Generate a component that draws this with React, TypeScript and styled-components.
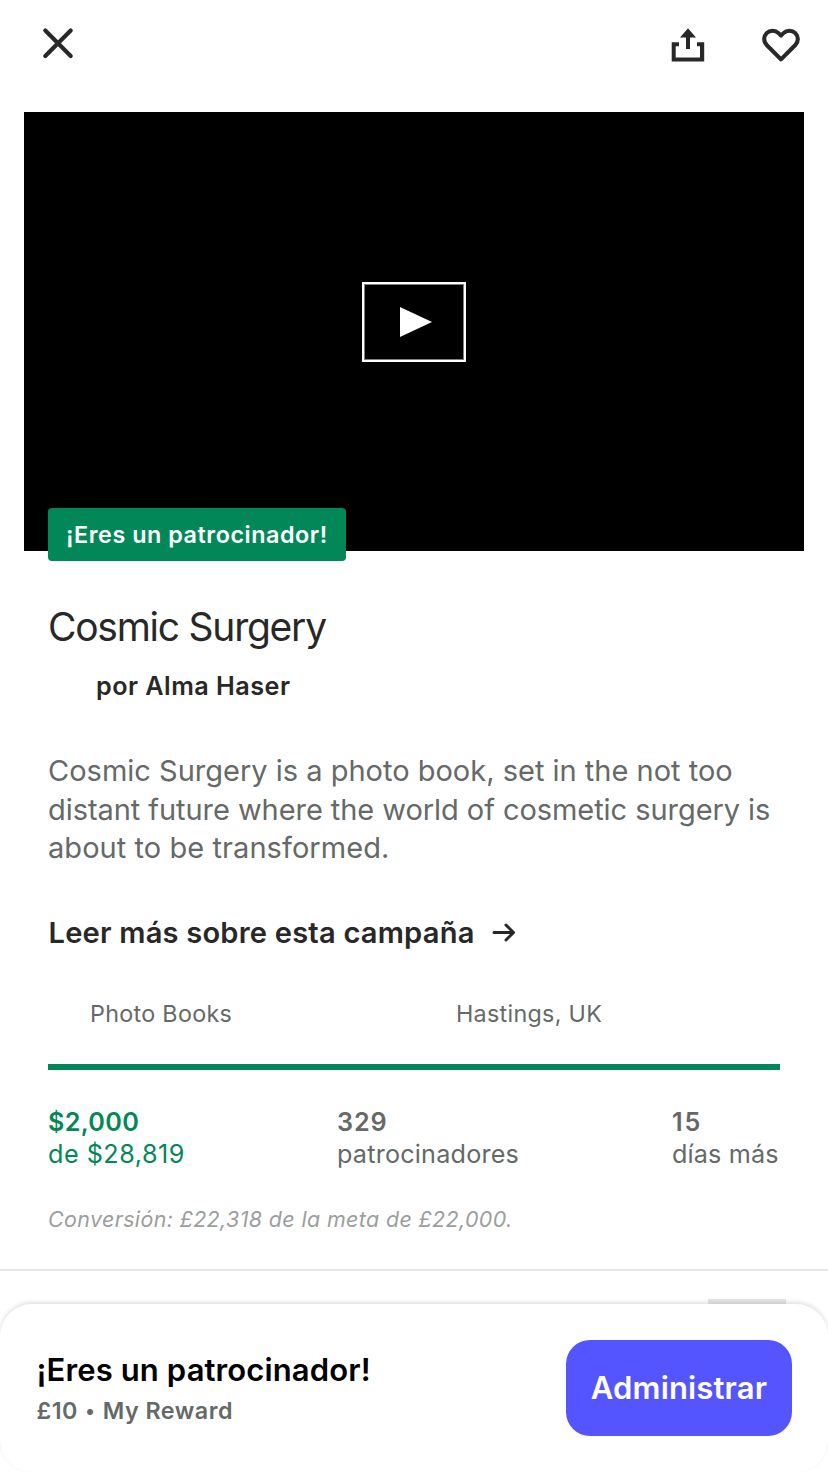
import React from 'react';
import styled, { createGlobalStyle } from 'styled-components';

const Global = createGlobalStyle`
  * { box-sizing: border-box; }
  body { margin: 0; background: #fff; font-family: Inter, "Liberation Sans", sans-serif; }
`;

const Screen = styled.div`
  position: relative;
  width: 828px;
  height: 1472px;
  overflow: hidden;
  background: #fff;
  color: #282828;
`;
const TopBar = styled.header`
  display: flex;
  align-items: center;
  justify-content: space-between;
  height: 88px;
  padding: 0 25px 0 40px;
`;
const Actions = styled.div`
  display: flex;
  gap: 52px;
`;
const IconButton = styled.button`
  display: flex;
  padding: 0;
  border: 0;
  background: none;
`;
const Video = styled.section`
  display: flex;
  align-items: center;
  justify-content: center;
  position: relative;
  height: 439px;
  margin: 24px 24px 0;
  padding-bottom: 19px;
  background: #000;
`;
const PlayButton = styled.button`
  display: flex;
  align-items: center;
  justify-content: center;
  width: 104px;
  height: 80px;
  padding: 0 0 0 4px;
  border: 2px solid #fff;
  box-shadow: inset 0 0 0 1px #808080;
  background: #000;
`;
const BackerBadge = styled.div`
  position: absolute;
  left: 24px;
  bottom: -10px;
  width: 298px;
  height: 53px;
  border-radius: 4px;
  background: #028858;
  display: flex;
  align-items: center;
  padding-left: 18px;
`;
const Details = styled.main`
  padding: 50px 48px 0;
`;
const Line = styled.div<{ $size: number; $lh: number; $ls?: number; $weight?: number; $color?: string; $italic?: boolean }>`
  font-size: ${p => p.$size}px;
  line-height: ${p => p.$lh}px;
  letter-spacing: ${p => p.$ls ?? 0}px;
  font-weight: ${p => p.$weight ?? 400};
  color: ${p => p.$color ?? '#282828'};
  font-style: ${p => (p.$italic ? 'italic' : 'normal')};
  white-space: nowrap;
`;
const Dot = styled.span`
  margin: 0 1px;
  font-size: 19px;
  line-height: 1;
  vertical-align: 1.5px;
`;
const Creator = styled.div`
  padding: 19px 0 0 48px;
`;
const Blurb = styled.div`
  padding-top: 50px;
`;
const ReadMore = styled.div`
  display: flex;
  align-items: center;
  gap: 17px;
  margin-top: 46.5px;
  padding-left: 0.5px;
`;
const Tags = styled.div`
  display: grid;
  grid-template-columns: 366px 1fr;
  padding: 47px 0 0 42px;
`;
const Progress = styled.div`
  height: 6px;
  margin-top: 35px;
  background: #028858;
`;
const Stats = styled.div`
  display: grid;
  grid-template-columns: 289px 335px 1fr;
  padding-top: 36px;
`;
const Conversion = styled.div`
  padding-top: 34px;
`;
const Divider = styled.div`
  height: 2px;
  margin-top: 35px;
  background: #e6e6e6;
`;
const Peek = styled.div`
  width: 78px;
  height: 10px;
  margin: 28px 0 0 708px;
  background: #e6e6ea;
`;
const PledgeBar = styled.footer`
  position: absolute;
  left: 0;
  right: 0;
  bottom: 0;
  height: 168px;
  display: flex;
  justify-content: space-between;
  padding: 36px 36px 0;
  border-radius: 32px;
  background: #fff;
  box-shadow: 0 -2px 4px rgba(0, 0, 0, 0.12);
`;
const PledgeText = styled.div`
  padding: 10px 0 0 0.5px;
`;
const ManageButton = styled.button`
  width: 226px;
  height: 96px;
  padding: 0;
  border: 0;
  border-radius: 24px;
  background: #5555ff;
  display: flex;
  align-items: center;
  justify-content: center;
  font-family: inherit;
`;

const stats = [
  { value: '$2,000', label: 'de $28,819', color: '#028858', valueLs: 0.3, labelLs: 0.5 },
  { value: '329', label: 'patrocinadores', color: '#656969', valueLs: 0.9, labelLs: 0.2 },
  { value: '15', label: 'días más', color: '#656969', valueLs: 1.8, labelLs: 0.15 },
];
const blurb = [
  { text: 'Cosmic Surgery is a photo book, set in the not too', ls: 0 },
  { text: 'distant future where the world of cosmetic surgery is', ls: -0.06 },
  { text: 'about to be transformed.', ls: 0.06 },
];

export default function App() {
  return (
    <Screen>
      <Global />
      <TopBar>
        <IconButton aria-label="Cerrar">
          <svg width="36" height="36" viewBox="0 0 36 36" fill="none" stroke="#282828" strokeWidth="4.2" strokeLinecap="round">
            <path d="M5.300 4.500 30.700 29.900M30.700 4.500 5.300 29.900" />
          </svg>
        </IconButton>
        <Actions>
          <IconButton aria-label="Compartir">
            <svg width="40" height="40" viewBox="0 0 40 40" fill="#282828">
              <path d="M4.700 18.300H12v4H8.700v11.200h24.300V22.300H30v-4h7.200v19.200H4.700Z" />
              <path d="M21 4.200 29 13.500H23V25H19V13.500H13Z" />
            </svg>
          </IconButton>
          <IconButton aria-label="Guardar">
            <svg width="44" height="40" viewBox="0 0 44 40" fill="none" stroke="#282828" strokeWidth="4.1" strokeLinejoin="round">
              <path d="M22 35.400 7.660 21.040A8.400 8.400 0 0 1 19.540 9.160L22 11.600 24.460 9.160A8.400 8.400 0 0 1 36.340 21.040Z" />
            </svg>
          </IconButton>
        </Actions>
      </TopBar>
      <Video>
        <PlayButton aria-label="Reproducir">
          <svg width="32" height="30" viewBox="0 0 32 30"><path d="M0 0 32 15 0 30Z" fill="#fff" /></svg>
        </PlayButton>
        <BackerBadge><Line $size={23.3} $lh={30} $ls={0.57} $weight={600} $color="#fff">¡Eres un patrocinador!</Line></BackerBadge>
      </Video>
      <Details>
        <Line $size={39} $lh={51} $ls={-1.25}>Cosmic Surgery</Line>
        <Creator><Line $size={25.2} $lh={31} $ls={0.47} $weight={600}>por Alma Haser</Line></Creator>
        <Blurb>{blurb.map(b => <Line key={b.text} $size={29} $lh={38.5} $ls={b.ls} $color="#656969">{b.text}</Line>)}</Blurb>
        <ReadMore>
          <Line $size={29.1} $lh={38} $ls={0.2} $weight={600}>Leer más sobre esta campaña</Line>
          <svg width="24" height="22" viewBox="0 0 24 22" fill="none" stroke="#282828" strokeWidth="3" strokeLinecap="round" strokeLinejoin="round"><path d="M2 10.500h19M14 3l7.500 7.500-7.500 7.500" /></svg>
        </ReadMore>
        <Tags>
          <Line $size={23.3} $lh={30} $ls={0.3} $color="#656969">Photo Books</Line>
          <Line $size={23.3} $lh={30} $ls={0.3} $color="#656969">Hastings, UK</Line>
        </Tags>
        <Progress />
        <Stats>
          {stats.map(s => (
            <div key={s.label}>
              <Line $size={25.2} $lh={32} $ls={s.valueLs} $weight={600} $color={s.color}>{s.value}</Line>
              <Line $size={25.2} $lh={32} $ls={s.labelLs} $color={s.color}>{s.label}</Line>
            </div>
          ))}
        </Stats>
        <Conversion><Line $size={21.4} $lh={30} $ls={0.4} $color="#9b9e9e" $italic>Conversión: £22,318 de la meta de £22,000.</Line></Conversion>
      </Details>
      <Divider />
      <Peek />
      <PledgeBar>
        <PledgeText>
          <Line $size={31} $lh={40} $ls={0.12} $weight={600} $color="#000">¡Eres un patrocinador!</Line>
          <Line $size={23.3} $lh={42} $ls={0.5} $weight={600} $color="#656969">£10 <Dot>•</Dot> My Reward</Line>
        </PledgeText>
        <ManageButton><Line $size={31} $lh={40} $ls={0.15} $weight={600} $color="#fff">Administrar</Line></ManageButton>
      </PledgeBar>
    </Screen>
  );
}
